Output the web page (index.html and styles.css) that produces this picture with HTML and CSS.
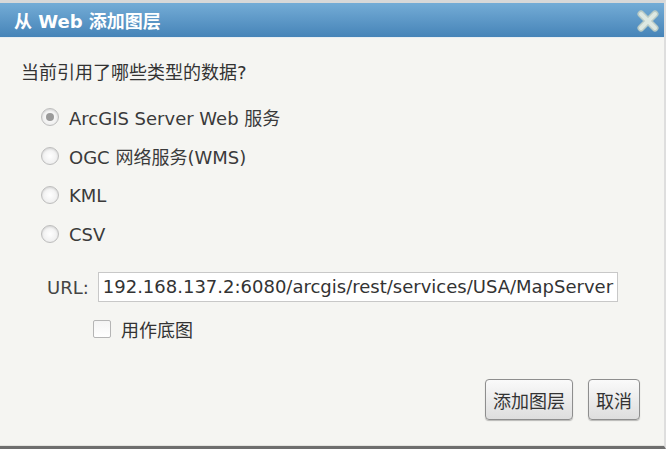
FILE: index.html
```html
<!DOCTYPE html>
<html lang="zh-CN">
<head>
    <meta charset="UTF-8">
    <title>从 Web 添加图层</title>
    <link rel="stylesheet" href="styles.css">
</head>
<body>
    <div class="dialog">
        <div class="titlebar">
            <span class="title">从 Web 添加图层</span>
            <span class="close">
                <svg width="22" height="22" viewBox="0 0 22 22">
                    <path d="M4 4 L18 18 M18 4 L4 18" stroke="#b9cbc6" stroke-width="7" stroke-linecap="round"/>
                    <path d="M4 4 L18 18 M18 4 L4 18" stroke="#dde8e2" stroke-width="4" stroke-linecap="round"/>
                </svg>
            </span>
        </div>
        <div class="content">
            <p class="question">当前引用了哪些类型的数据?</p>
            <div class="options">
                <label class="option"><span class="radio checked"></span>ArcGIS Server Web 服务</label>
                <label class="option"><span class="radio"></span>OGC 网络服务(WMS)</label>
                <label class="option"><span class="radio"></span>KML</label>
                <label class="option"><span class="radio"></span>CSV</label>
            </div>
            <div class="url-row">
                <span class="url-label">URL:</span>
                <div class="url-input">192.168.137.2:6080/arcgis/rest/services/USA/MapServer</div>
            </div>
            <label class="basemap"><span class="checkbox"></span>用作底图</label>
            <div class="actions">
                <button class="btn">添加图层</button>
                <button class="btn">取消</button>
            </div>
        </div>
    </div>
</body>
</html>
```

FILE: styles.css
```css
body {
    margin: 0;
    padding: 0;
    background-color: #f5f5f2;
    font-family: "DejaVu Sans", Verdana, "Noto Sans CJK SC", sans-serif;
    color: #333;
}

.dialog {
    width: 666px;
    height: 449px;
    box-sizing: border-box;
    border-top: 3px solid #d8d8d8;
    border-right: 2px solid #dedede;
    border-bottom: 3px solid #6e6e6e;
    background-color: #f5f5f2;
    display: flex;
    flex-direction: column;
}

.titlebar {
    height: 34px;
    background: linear-gradient(#74acd6, #4684b8);
    display: flex;
    align-items: center;
    justify-content: space-between;
    padding: 0 5px 0 14px;
    border-bottom: 1px solid #e8eef2;
}

.title {
    color: white;
    font-weight: bold;
    font-size: 18px;
}

.close {
    display: flex;
    margin-top: 2px;
}

.content {
    flex: 1;
    padding: 0 0 0 21px;
    border-bottom: 1px solid #e4e4e0;
}

.question {
    margin: 20px 0 0 0;
    font-size: 18px;
    color: #333;
}

.options {
    display: flex;
    flex-direction: column;
    gap: 17px;
    margin: 22px 0 0 20px;
}

.option {
    display: flex;
    align-items: center;
    font-size: 18px;
    height: 22px;
    color: #3a3a3a;
}

.radio {
    width: 16px;
    height: 16px;
    border-radius: 50%;
    border: 1px solid #bdbdbd;
    background: radial-gradient(#ffffff, #e8e8e8);
    box-shadow: inset 0 1px 2px rgba(0, 0, 0, 0.12);
    margin-right: 10px;
    position: relative;
}

.radio.checked::after {
    content: "";
    position: absolute;
    left: 4px;
    top: 4px;
    width: 8px;
    height: 8px;
    border-radius: 50%;
    background: #9a9a9a;
}

.url-row {
    display: flex;
    align-items: center;
    margin: 27px 0 0 26px;
}

.url-label {
    font-size: 18px;
    color: #444;
    margin-right: 9px;
}

.url-input {
    width: 514px;
    height: 28px;
    line-height: 28px;
    border: 1px solid #c8c8c8;
    background: white;
    padding-left: 4px;
    font-size: 18px;
    color: #333;
    white-space: nowrap;
    overflow: hidden;
}

.basemap {
    display: flex;
    align-items: center;
    margin: 14px 0 0 72px;
    font-size: 18px;
}

.checkbox {
    width: 16px;
    height: 16px;
    border: 1px solid #b5b5b5;
    border-radius: 2px;
    background: linear-gradient(#f4f4f4, #ffffff);
    margin-right: 10px;
}

.actions {
    display: flex;
    justify-content: flex-end;
    gap: 15px;
    margin: 37px 24px 0 0;
}

.btn {
    font-family: inherit;
    font-size: 18px;
    color: #333;
    height: 41px;
    padding: 0 7px;
    border: 1px solid #8e8e8e;
    border-radius: 4px;
    background: linear-gradient(#fafafa, #dedede);
    box-shadow: 0 1px 1px rgba(0, 0, 0, 0.25);
}
```
